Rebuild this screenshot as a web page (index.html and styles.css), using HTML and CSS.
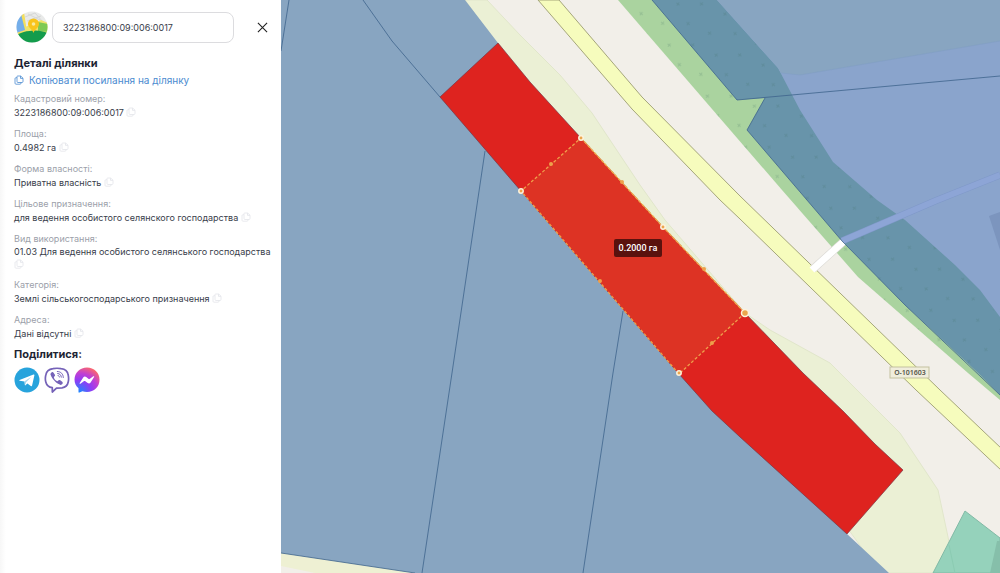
FILE: index.html
```html
<!DOCTYPE html>
<html lang="uk">
<head>
<meta charset="utf-8">
<meta name="viewport" content="width=device-width, initial-scale=1">
<title>Деталі ділянки</title>
<link rel="stylesheet" href="styles.css">
</head>
<body>
<svg class="sprite" aria-hidden="true">
  <symbol id="copy" viewBox="0 0 10 10">
    <path d="M3.500 1h3.200L9 3.200v3.300a1 1 0 0 1-1 1H4a1 1 0 0 1-1-1V1.600a.6.6 0 0 1 .5-.6zM6.500 1v2.400H9M3 2.700H2a1 1 0 0 0-1 1V8.200a1 1 0 0 0 1 1h4a1 1 0 0 0 1-1v-.7" fill="none" stroke="currentColor" stroke-width=".8"/>
  </symbol>
</svg>
<div class="app">
  <aside class="panel">
    <header class="search">
      <svg class="logo" viewBox="0 0 32 32" aria-hidden="true">
        <defs><clipPath id="disc"><circle cx="16" cy="16" r="15.500"/></clipPath></defs>
        <g clip-path="url(#disc)">
          <rect width="32" height="32" fill="#e9eae9"/>
          <path d="M9 6l10-4 8 9M12 3l12 6M11 10l14-5" fill="none" stroke="#d5d7d6"/>
          <path d="M0 0h6l4 20-10 3z" fill="#74aeea"/>
          <path d="M5 3l3-2 3 20-11 4v-3l9-3z" fill="#f3df5e"/>
          <path d="M9 16l8-3 8-4 7 3v10H9z" fill="#efe36a"/>
          <path d="M22 11l10 2v8l-10-1z" fill="#7fca54"/>
          <path d="M0 24c5-2 9-4 14-4 7-1 12 0 18 2v10H0z" fill="#149c4c"/>
        </g>
        <path d="M17.500 22c-1-4-5.500-5-5.500-9a5.500 5.500 0 0 1 11 0c0 4-4.500 5-5.500 9z" fill="#f8c41d"/>
        <circle cx="17.500" cy="13" r="1.800" fill="#f8eba0"/>
      </svg>
      <input class="search-input" type="text" value="3223186800:09:006:0017" aria-label="Кадастровий номер">
      <button class="close" type="button" aria-label="Закрити">
        <svg viewBox="0 0 12 12"><path d="M1 1l10 10M11 1L1 11" fill="none" stroke="currentColor" stroke-width="1.200"/></svg>
      </button>
    </header>
    <h1 class="heading">Деталі ділянки</h1>
    <a class="copy-link" href="#parcel"><svg class="copy-icon"><use href="#copy"/></svg><span>Копіювати посилання на ділянку</span></a>
    <dl class="details">
      <div class="field"><dt>Кадастровий номер:</dt><dd>3223186800:09:006:0017 <button class="copy" type="button" aria-label="Копіювати"><svg class="copy-icon"><use href="#copy"/></svg></button></dd></div>
      <div class="field"><dt>Площа:</dt><dd>0.4982 га <button class="copy" type="button" aria-label="Копіювати"><svg class="copy-icon"><use href="#copy"/></svg></button></dd></div>
      <div class="field"><dt>Форма власності:</dt><dd>Приватна власність <button class="copy" type="button" aria-label="Копіювати"><svg class="copy-icon"><use href="#copy"/></svg></button></dd></div>
      <div class="field"><dt>Цільове призначення:</dt><dd>для ведення особистого селянского господарства <button class="copy" type="button" aria-label="Копіювати"><svg class="copy-icon"><use href="#copy"/></svg></button></dd></div>
      <div class="field field-long"><dt>Вид використання:</dt><dd>01.03 Для ведення особистого селянського господарства <button class="copy" type="button" aria-label="Копіювати"><svg class="copy-icon"><use href="#copy"/></svg></button></dd></div>
      <div class="field"><dt>Категорія:</dt><dd>Землі сільськогосподарського призначення <button class="copy" type="button" aria-label="Копіювати"><svg class="copy-icon"><use href="#copy"/></svg></button></dd></div>
      <div class="field"><dt>Адреса:</dt><dd>Дані відсутні <button class="copy" type="button" aria-label="Копіювати"><svg class="copy-icon"><use href="#copy"/></svg></button></dd></div>
    </dl>
    <h2 class="heading">Поділитися:</h2>
    <nav class="share" aria-label="Поділитися">
      <a href="#telegram" aria-label="Telegram">
        <svg viewBox="0 0 26 26"><circle cx="13" cy="13" r="12.500" fill="#27a3dc"/><path d="M5.500 13L19.500 7.500c.7-.2 1 .2.900.8l-2.300 10.200c-.2.8-.7.900-1.300.5l-3.400-2.500-1.700 1.600c-.5.5-.9.300-.9-.3l-.3-3.300-4.800-.8c-.6-.2-.7-.5-.2-.7z" fill="#fff"/><path d="M10.600 14.300l6.800-4.600-5.300 5.600-.7 2.600z" fill="#a9d6ee"/></svg>
      </a>
      <a href="#viber" aria-label="Viber">
        <svg viewBox="0 0 26 26" fill="none" stroke="#7562b8" stroke-linecap="round"><path d="M9 1.700Q13 .8 17 1.700Q23.500 2.500 24.200 8Q25 12 24.200 15Q23.300 20 18 20.800L12.500 21.200 8.300 25V20.700Q3 20 1.800 15Q.900 12 1.800 8Q2.700 2.700 9 1.700z" stroke-width="1.700" stroke-linejoin="round"/><path d="M7.500 5.500c1-.8 1.600-.4 2.200.5l1.200 1.800c.5.900-.1 1.400-.8 2-.8.800.9 3.700 3.100 4.400.9.200 1.200-1.400 2.300-1.100 1 .3 2.400 1.500 3.100 2.200.7.900-.7 2.700-1.900 2.600C12.800 16.800 8 12.300 6.500 7.500c-.2-.8.300-1.500 1-2z" fill="#7562b8" stroke="none"/><path d="M13.300 4.500c3.700 0 6 2.600 6 6M13.700 6.500c2.200.2 3.500 1.500 3.600 3.700M14 8.500c.9.100 1.300.6 1.400 1.500"/></svg>
      </a>
      <a href="#messenger" aria-label="Messenger">
        <svg viewBox="0 0 26 26"><defs><radialGradient id="msg" cx=".2" cy="1" r="1.100"><stop offset="0" stop-color="#168bff"/><stop offset=".45" stop-color="#8f3df5"/><stop offset=".7" stop-color="#c03fd4"/><stop offset="1" stop-color="#ff6a66"/></radialGradient></defs><path d="M13 .5C6 .5.500 5.500.500 12.500c0 3.700 1.500 6.700 4 8.800V25c0 .6.400.8.900.6l3-1.300c1.500.5 3 .6 4.600.6 7 0 12.500-5 12.500-12.200C25.500 5.500 20 .5 13 .5z" fill="url(#msg)"/><path d="M5.700 16l3.500-5.500c.8-1.100 2-1.200 3-.4l2.500 1.900c.3.200.6.200.9 0l3.700-2.700c.6-.4 1.200.2.800.8L16.600 15.500c-.7 1.100-1.900 1.300-2.900.5L11 14.100c-.3-.2-.6-.2-.9 0l-3.600 2.600c-.6.400-1.200-.1-.8-.7z" fill="#fff"/></svg>
      </a>
    </nav>
  </aside>
  <main class="map">
    <svg class="map-canvas" viewBox="281 0 719 573" preserveAspectRatio="xMidYMid slice" role="img" aria-label="Карта ділянки">
      <defs>
        <pattern id="trees" width="48" height="42" patternUnits="userSpaceOnUse" patternTransform="rotate(12)">
          <path d="M4 5l4 2M7 4l-2 4M27 10l4 2M30 9l-2 4M13 25l4 2M16 24l-2 4M38 30l4 2M41 29l-2 4" stroke="#37705c" stroke-opacity=".18"/>
        </pattern>
      </defs>
      <rect x="281" width="719" height="573" fill="#f2efe9"/>
      <path d="M465 0h22l33 35 40 40 32 38 48 72 25 35 80 93 25 17 60 33 20 20 50 50 38 57 10 47 7 36H880z" fill="#ebf0d5" stroke="#e1e6cb"/>
      <path d="M281 550v16l34 7h110z" fill="#eef0d3"/>
      <path d="M281 0H465L498 43 620 250 847 534 889 573H415L281 553z" fill="#88a5c1"/>
      <path d="M538 0L632 109 720 200 740 219 916 390 1002 471V449L940 390 740 196 642 97 559 0z" fill="#f6fcbd" stroke="#a5a67b"/>
      <path d="M618 0H730L1000 290V400L968 373 913 325 858 277 782 190z" fill="#aad39f"/>
      <path d="M652 0H1000V395L978 373 905 305 842 241 747 130 765 98 737 100z" fill="#6894aa"/>
      <path d="M618 0H730L778 68 800 110 833 162 905 220 955 265 1000 317V400L968 373 913 325 858 277 782 190z" fill="url(#trees)"/>
      <path d="M717 0H1000V317L980 290 955 265 905 220 877 200 833 162 800 110 778 68z" fill="#8aa4cc"/>
      <path d="M717 0H1000V41L800 75 781 73 778 68z" fill="#88a5c1"/>
      <path d="M781 73L800 75 1000 41" fill="none" stroke="#809dc4" stroke-opacity=".5"/>
      <path d="M989 216l11-4v38z" fill="#7c95be"/>
      <path d="M842 241L935 201 1000 175" fill="none" stroke="#7f98c8" stroke-width="7"/>
      <path d="M842 241L935 201 1000 175" fill="none" stroke="#8da5d6" stroke-width="6"/>
      <path d="M813 269L843 242" stroke="#d9d7d2" stroke-width="8"/>
      <path d="M812 270L843 242" stroke="#fff" stroke-width="7"/>
      <path d="M933 573L965 511 1000 538V573z" fill="#95d2bb" stroke="#82b9a5"/>
      <path d="M997 541L990 573H1000V541z" fill="#86bfaa"/>
      <path d="M949 545L955 573" fill="none" stroke="#8bcbb2"/>
      <g class="borders">
        <path d="M289 0L281 51M363 0L392 41 440 97M485 151L452 373 422 573M623 311L613 373 583 573M281 553L415 573M652 0L737 100 1000 76M765 98L747 130 842 241 905 305 1000 395"/>
      </g>
      <path d="M498 43L530 82 581 138 663 227 745 313 803 373 843 411 875 444 903 470 847 534 740 437 712 411 679 374 521 191 440 97z" fill="#de231f" stroke="#793544" stroke-width=".7"/>
      <path d="M581 138L663 227 745 313 679 374 521 191z" fill="#dd3324" stroke="#eea04b" stroke-width="1.300" stroke-dasharray="3 2"/>
      <path d="M581 138L663 227 745 313" fill="none" stroke="#efb155"/>
      <g fill="#eea04b"><circle cx="551" cy="164" r="2"/><circle cx="622" cy="182" r="2"/><circle cx="704" cy="269" r="2"/><circle cx="600" cy="281" r="2"/><circle cx="712" cy="343" r="2"/></g>
      <g fill="#eba54c" stroke="#fdf3dc" stroke-width="1.500"><circle cx="521" cy="191" r="2.200"/><circle cx="581" cy="138" r="2.200"/><circle cx="663" cy="227" r="2.200"/><circle cx="679" cy="373" r="2.200"/><circle cx="745" cy="313" r="3.500"/></g>
      <rect x="614" y="239" width="48" height="18" rx="2" fill="#5a120e"/>
      <text class="area-label" x="638" y="251">0.2000 га</text>
      <rect x="890" y="367" width="39" height="11" fill="#f0eddc" stroke="#c4c29f"/>
      <text class="road-label" x="910" y="375">О-101603</text>
    </svg>
  </main>
</div>
</body>
</html>
```
FILE: styles.css
```css
* { box-sizing: border-box; }

body {
  margin: 0;
  font-family: Inter, "Noto Sans", sans-serif;
  font-size: 9px;
  color: #383d4a;
}

.sprite {
  position: absolute;
  width: 0;
  height: 0;
}

.app {
  display: flex;
  min-height: 100vh;
}

.panel {
  flex: none;
  width: clamp(281px, 28%, 360px);
  padding: 11px 8px 16px 14px;
  background: linear-gradient(to right, #f7f7f7, #fff 6px);
}

.search {
  display: flex;
  align-items: center;
  gap: 4px;
  padding-left: 2px;
  margin-bottom: 12px;
}

.logo {
  flex: none;
  width: 32px;
  height: 32px;
}

.search-input {
  flex: 1;
  min-width: 0;
  height: 31px;
  padding: 0 10px;
  border: 1px solid #dcdcdf;
  border-radius: 8px;
  background: #fff;
  color: #383d4a;
  font: inherit;
}

.close {
  display: flex;
  margin-left: 14px;
  padding: 5px;
  border: 0;
  background: none;
  color: #222;
}

.close svg {
  width: 11px;
  height: 11px;
}

.heading {
  margin: 0;
  color: #1d2433;
  font-size: 11px;
  font-weight: 700;
  line-height: 16px;
}

.copy-link {
  display: flex;
  align-items: center;
  gap: 5px;
  margin-bottom: 3px;
  color: #4b8bd0;
  font-size: 10px;
  line-height: 18px;
  text-decoration: none;
}

.copy-icon {
  display: block;
  width: 10px;
  height: 10px;
}

.details {
  display: grid;
  gap: 7px;
  margin: 0 0 5px;
}

.field dt {
  color: #9c9faa;
  line-height: 13px;
}

.field dd {
  margin: 0;
  line-height: 15px;
}

.field-long dd {
  line-height: 13px;
}

.copy {
  padding: 0;
  border: 0;
  background: none;
  color: #e3e5ea;
  vertical-align: -1px;
}

.share {
  display: flex;
  gap: 4px;
  margin-top: 5px;
}

.share svg {
  display: block;
  width: 26px;
  height: 26px;
}

.map {
  position: relative;
  flex: 1;
  min-width: 0;
}

.map-canvas {
  position: absolute;
  inset: 0;
  width: 100%;
  height: 100%;
}

.borders {
  fill: none;
  stroke: #3f648c;
  stroke-width: 1px;
  stroke-opacity: .8;
}

.area-label {
  fill: #fff;
  font-family: Roboto, sans-serif;
  font-size: 9px;
  font-weight: 500;
  text-anchor: middle;
}

.road-label {
  fill: #55554a;
  font-family: "Noto Sans", sans-serif;
  font-size: 7px;
  font-weight: 600;
  text-anchor: middle;
}
```
